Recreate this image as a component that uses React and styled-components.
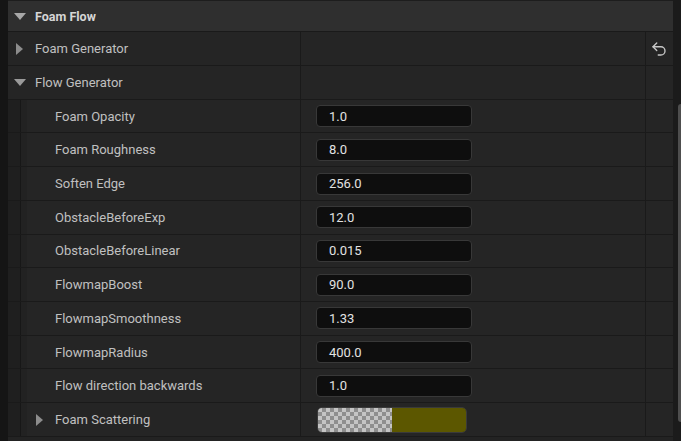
import React from "react"
import styled, { createGlobalStyle } from "styled-components"
import { Undo2 } from "lucide-react"

const GlobalStyle = createGlobalStyle`
  html, body {
    margin: 0;
    padding: 0;
    background: #151515;
  }
  body {
    font-family: Roboto, "Noto Sans", sans-serif;
    font-size: 13px;
    color: #c0c0c0;
  }
`

const properties = [
  { name: "Foam Opacity", value: "1.0" },
  { name: "Foam Roughness", value: "8.0" },
  { name: "Soften Edge", value: "256.0" },
  { name: "ObstacleBeforeExp", value: "12.0" },
  { name: "ObstacleBeforeLinear", value: "0.015" },
  { name: "FlowmapBoost", value: "90.0" },
  { name: "FlowmapSmoothness", value: "1.33" },
  { name: "FlowmapRadius", value: "400.0" },
  { name: "Flow direction backwards", value: "1.0" },
]

// triangle used for expanded / collapsed groups
const Caret = ({ open, color }) => (open ? <DownArrow $color={color} /> : <RightArrow />)

const App = () => (
  <>
    <GlobalStyle />
    <PanelStyle>
      <GutterStyle />
      <ContentStyle>
        <HeaderStyle>
          <ArrowSlotStyle $width={27}>
            <Caret open color="#a8a8a8" />
          </ArrowSlotStyle>
          <HeaderTitleStyle>Foam Flow</HeaderTitleStyle>
        </HeaderStyle>

        <RowStyle>
          <NameCellStyle>
            <ArrowSlotStyle $width={27}>
              <Caret />
            </ArrowSlotStyle>
            <LabelStyle>Foam Generator</LabelStyle>
          </NameCellStyle>
          <ValueCellStyle />
          <ResetCellStyle>
            <Undo2 size={18} strokeWidth={1.8} color="#c8c8c8" />
          </ResetCellStyle>
        </RowStyle>

        <RowStyle>
          <NameCellStyle>
            <ArrowSlotStyle $width={27}>
              <Caret open color="#9a9a9a" />
            </ArrowSlotStyle>
            <LabelStyle>Flow Generator</LabelStyle>
          </NameCellStyle>
          <ValueCellStyle />
          <ResetCellStyle />
        </RowStyle>

        {properties.map(prop => (
          <RowStyle key={prop.name}>
            <NameCellStyle>
              <IndentGuideStyle />
              <IndentInnerStyle />
              <ArrowSlotStyle $width={28} />
              <LabelStyle>{prop.name}</LabelStyle>
            </NameCellStyle>
            <ValueCellStyle>
              <NumberInputStyle>{prop.value}</NumberInputStyle>
            </ValueCellStyle>
            <ResetCellStyle />
          </RowStyle>
        ))}

        <RowStyle>
          <NameCellStyle>
            <IndentGuideStyle />
            <IndentInnerStyle />
            <ArrowSlotStyle $width={28} $offset={1}>
              <Caret />
            </ArrowSlotStyle>
            <LabelStyle>Foam Scattering</LabelStyle>
          </NameCellStyle>
          <ValueCellStyle>
            <ColorSwatchStyle>
              <CheckerStyle />
              <SolidColorStyle $color="#5c5700" />
            </ColorSwatchStyle>
          </ValueCellStyle>
          <ResetCellStyle />
        </RowStyle>
      </ContentStyle>
      <ScrollTrackStyle>
        <ScrollThumbStyle />
      </ScrollTrackStyle>
    </PanelStyle>
  </>
)

const PanelStyle = styled.div`
  display: flex;
  width: 681px;
  height: 441px;
  overflow: hidden;
  background: #151515;
`

const GutterStyle = styled.div`
  width: 8px;
  flex-shrink: 0;
  background: #151515;
`

const ContentStyle = styled.div`
  flex: 1;
  display: flex;
  flex-direction: column;
  background: #232323;
`

const HeaderStyle = styled.div`
  box-sizing: border-box;
  height: 32.3px;
  flex-shrink: 0;
  display: flex;
  align-items: center;
  background: #2f2f2f;
  border-top: 1px solid #1d1d1d;
  border-bottom: 1px solid #1a1a1a;
`

const HeaderTitleStyle = styled.span`
  font-weight: 700;
  font-size: 12.5px;
  color: #d6d6d6;
`

const ArrowSlotStyle = styled.div`
  width: ${p => p.$width}px;
  flex-shrink: 0;
  display: flex;
  align-items: center;
  padding-left: ${p => p.$offset || 0}px;
  box-sizing: border-box;
`

const DownArrow = styled.span`
  width: 0;
  height: 0;
  margin-left: 6px;
  border-left: 6px solid transparent;
  border-right: 6px solid transparent;
  border-top: 7px solid ${p => p.$color};
`

const RightArrow = styled.span`
  width: 0;
  height: 0;
  margin-left: 8px;
  border-top: 6px solid transparent;
  border-bottom: 6px solid transparent;
  border-left: 7px solid #8c8c8c;
`

const RowStyle = styled.div`
  box-sizing: border-box;
  height: 33.72px;
  flex-shrink: 0;
  display: grid;
  grid-template-columns: 292px 344px 1fr;
  column-gap: 1px;
  background: #1a1a1a;
  border-bottom: 1px solid #1a1a1a;
`

const NameCellStyle = styled.div`
  display: flex;
  align-items: stretch;
  background: #252525;
`

const LabelStyle = styled.span`
  align-self: center;
  white-space: nowrap;
`

const IndentGuideStyle = styled.div`
  width: 12px;
  flex-shrink: 0;
  background: #1f1f1f;
  border-right: 1px solid #171717;
`

const IndentInnerStyle = styled.div`
  width: 6px;
  flex-shrink: 0;
  background: #222222;
`

const ValueCellStyle = styled.div`
  display: flex;
  align-items: center;
  padding-left: 15px;
  background: #252525;
`

const NumberInputStyle = styled.div`
  box-sizing: border-box;
  width: 156px;
  height: 22px;
  display: flex;
  align-items: center;
  padding-left: 12px;
  background: #0e0e0e;
  border: 1px solid #383838;
  border-radius: 4px;
  color: #e2e2e2;
  font-size: 13px;
`

const ColorSwatchStyle = styled.div`
  box-sizing: border-box;
  width: 150px;
  height: 26px;
  margin-left: 1px;
  display: flex;
  border: 1px solid #3a3a3a;
  border-radius: 5px;
  overflow: hidden;
`

const CheckerStyle = styled.div`
  width: 74px;
  background: repeating-conic-gradient(#8e8e8e 0 25%, #c4c4c4 0 50%) 0 0 / 8px
    8px;
`

const SolidColorStyle = styled.div`
  flex: 1;
  background: ${p => p.$color};
`

const ResetCellStyle = styled.div`
  display: flex;
  align-items: center;
  justify-content: center;
  padding-right: 2px;
  background: #252525;
`

const ScrollTrackStyle = styled.div`
  box-sizing: border-box;
  width: 8px;
  flex-shrink: 0;
  padding-left: 5px;
  padding-top: 104px;
  background: #1b1b1b;
`

const ScrollThumbStyle = styled.div`
  width: 6px;
  height: 318px;
  border-radius: 3px;
  background: #4e4e4e;
`

export default App
